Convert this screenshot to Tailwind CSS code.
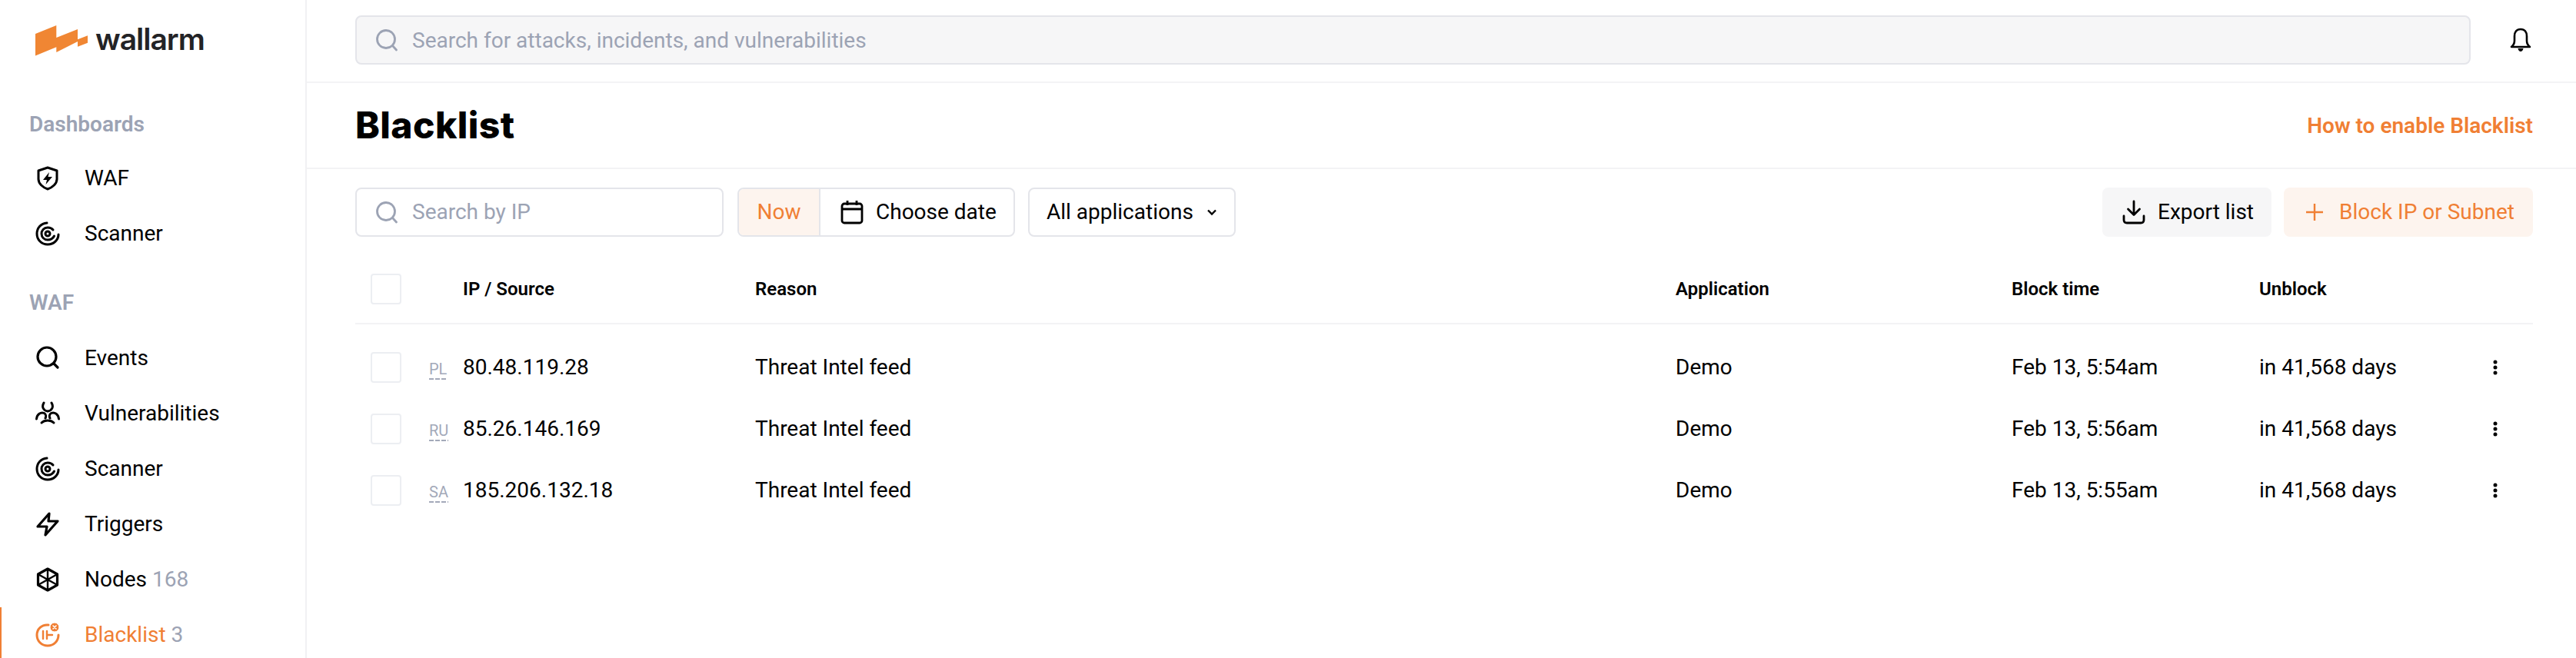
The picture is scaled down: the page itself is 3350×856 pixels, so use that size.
<!DOCTYPE html>
<html lang="en">
<head>
    <meta charset="UTF-8">
    <title>Wallarm - Blacklist</title>
    <script src="https://cdn.jsdelivr.net/npm/@tailwindcss/browser@4"></script>
</head>
<body class="bg-white font-['Roboto',sans-serif] text-[28px] leading-[40px] text-black overflow-hidden">
<div class="flex h-[856px] w-[3350px]">
    <!-- Sidebar -->
    <aside class="w-[399px] shrink-0 border-r-2 border-[#f1f1f3] overflow-hidden">
        <div class="flex items-center h-[106px] pl-[46px] gap-[10px]">
            <svg width="68" height="40" viewBox="0 0 68 40" class="mt-[-1px]">
                <path fill="#f08633" d="M0 11 27.300 0V16L55 5V18.300L68 13.300V22.700L55 27.700V21L27.300 35V28.300L0 39.500Z"/>
            </svg>
            <span class="font-['Inter',sans-serif] font-semibold text-[39px] tracking-[-1px] text-[#232326] mt-[-4px]">wallarm</span>
        </div>
        <div class="mt-[36px] pl-[38px] font-semibold text-[#9ca3b4]">Dashboards</div>
        <nav class="mt-[14px]">
            <a class="flex items-center h-[72px] pl-[46px] gap-[32px]">
                <svg class="w-[32px] h-[32px]" viewBox="0 0 32 32" fill="none" stroke="#000" stroke-width="3" stroke-linejoin="round"><path d="M16 2 28 6V17C28 23 22 28 16 30 10 28 4 23 4 17V6Z"/><path fill="#000" stroke="none" d="M18 8 10 18H15L13.500 24 22 14H16.500Z"/></svg>
                <span>WAF</span>
            </a>
            <a class="flex items-center h-[72px] pl-[46px] gap-[32px]">
                <svg class="w-[32px] h-[32px]" viewBox="0 0 32 32" fill="none" stroke="#000" stroke-width="3" stroke-linecap="round"><path d="M15 2C7 2.500 2 9 2 16 2 24 8 30 16 30 24 30 30 24 30 17"/><path d="M23 11C21 8.500 19 8 16 8 11 8 8 12 8 16 8 20.500 11.500 24 16 24 20 24 23 22 24.500 19"/><circle cx="16" cy="16" r="3"/></svg>
                <span>Scanner</span>
            </a>
        </nav>
        <div class="mt-[34px] pl-[38px] font-semibold text-[#9ca3b4]">WAF</div>
        <nav class="mt-[16px]">
            <a class="flex items-center h-[72px] pl-[46px] gap-[32px]">
                <svg class="w-[32px] h-[32px]" viewBox="0 0 32 32" fill="none" stroke="#000" stroke-width="3.200" stroke-linecap="round"><circle cx="15" cy="14" r="12"/><path d="M24 23 29 28"/></svg>
                <span>Events</span>
            </a>
            <a class="flex items-center h-[72px] pl-[46px] gap-[32px]">
                <svg class="w-[32px] h-[32px]" viewBox="0 0 32 32" fill="none" stroke="#000" stroke-width="3" stroke-linecap="round"><path d="M11 2C8 7 10 12 16 13 22 12 24 7 21 2"/><path d="M1.500 23C2 17 7 13.500 11.500 15.500 14 17 14 20 13 22"/><path d="M30.500 23C30 17 25 13.500 20.500 15.500 18 17 18 20 19 22"/><path d="M8 28C12 24 20 24 24 28"/></svg>
                <span>Vulnerabilities</span>
            </a>
            <a class="flex items-center h-[72px] pl-[46px] gap-[32px]">
                <svg class="w-[32px] h-[32px]" viewBox="0 0 32 32" fill="none" stroke="#000" stroke-width="3" stroke-linecap="round"><path d="M15 2C7 2.500 2 9 2 16 2 24 8 30 16 30 24 30 30 24 30 17"/><path d="M23 11C21 8.500 19 8 16 8 11 8 8 12 8 16 8 20.500 11.500 24 16 24 20 24 23 22 24.500 19"/><circle cx="16" cy="16" r="3"/></svg>
                <span>Scanner</span>
            </a>
            <a class="flex items-center h-[72px] pl-[46px] gap-[32px]">
                <svg class="w-[32px] h-[32px]" viewBox="0 0 32 32" fill="none" stroke="#000" stroke-width="3.200" stroke-linejoin="round"><path d="M18 2 3 19H15L13 30 29 12H17Z"/></svg>
                <span>Triggers</span>
            </a>
            <a class="flex items-center h-[72px] pl-[46px] gap-[32px]">
                <svg class="w-[32px] h-[32px]" viewBox="0 0 32 32" fill="none" stroke="#000" stroke-width="3.200" stroke-linejoin="round"><path d="M16 2 28.500 9V23L16 30 3.500 23V9Z"/><path d="M16 2V30M3.500 9 28.500 23M28.500 9 3.500 23" stroke-width="2.400"/></svg>
                <span>Nodes <span class="text-[#9ca3b4]">168</span></span>
            </a>
            <a class="flex items-center h-[72px] pl-[44px] gap-[32px] border-l-2 border-[#f07f34] text-[#f07f34]">
                <svg class="w-[32px] h-[32px]" viewBox="0 0 32 32" fill="none" stroke="#f07f34" stroke-width="3" stroke-linecap="round"><path d="M17 3C8 2 2 8.500 2 16 2 24 8 30 16 30 24 30 30 24 30 16"/><path d="M10 11V21M15 21V11M15 16H22" stroke-width="2.400"/><circle cx="25" cy="6" r="6" fill="#f07f34" stroke="#fff" stroke-width="1"/><path d="M23 4 27 8M27 4 23 8" stroke="#fff" stroke-width="1.600"/></svg>
                <span>Blacklist <span class="text-[#9ca3b4]">3</span></span>
            </a>
        </nav>
    </aside>

    <!-- Main -->
    <main class="flex-1 min-w-0">
        <header class="flex items-center h-[108px] pb-[2px] pl-[63px] border-b-2 border-[#f3f3f5]">
            <div class="flex items-center w-[2751px] h-[64px] pl-[24px] gap-[18px] bg-[#f6f6f7] border-2 border-[#e4e5ea] rounded-[8px] text-[#9ca3b4]">
                <svg class="w-[30px] h-[30px]" viewBox="0 0 30 30" fill="none" stroke="#9ca3b4" stroke-width="2.800" stroke-linecap="round"><circle cx="14" cy="14" r="11.500"/><path d="M23 23 27.500 28"/></svg>
                <span class="pt-[2px]">Search for attacks, incidents, and vulnerabilities</span>
            </div>
            <svg class="ml-[49px] w-[32px] h-[32px]" viewBox="0 0 32 32" fill="none" stroke="#000" stroke-width="2.600" stroke-linejoin="round"><path d="M16 2C10.500 2 8 6 8 11V17C8 20 6.500 23 4 25H28C25.500 23 24 20 24 17V11C24 6 21.500 2 16 2Z"/><path fill="#000" stroke="none" d="M12.500 27H19.500C19 29.500 17.500 31 16 31 14.500 31 13 29.500 12.500 27Z"/></svg>
        </header>

        <div class="flex items-center justify-between h-[112px] pl-[63px] pr-[56px] border-b-2 border-[#f3f3f5]">
            <h1 class="font-['Inter',sans-serif] font-extrabold text-[48px] tracking-[0.4px]">Blacklist</h1>
            <a class="pt-[2px] font-semibold text-[#f07f34]">How to enable Blacklist</a>
        </div>

        <!-- Toolbar -->
        <div class="flex items-center mt-[24px] pl-[63px] pr-[56px]">
            <div class="flex items-center w-[479px] h-[64px] pl-[24px] gap-[18px] border-2 border-[#e4e5ea] rounded-[8px] text-[#9ca3b4]">
                <svg class="w-[30px] h-[30px]" viewBox="0 0 30 30" fill="none" stroke="#9ca3b4" stroke-width="2.800" stroke-linecap="round"><circle cx="14" cy="14" r="11.500"/><path d="M23 23 27.500 28"/></svg>
                <span>Search by IP</span>
            </div>
            <div class="flex h-[64px] ml-[18px] w-[361px] border-2 border-[#e4e5ea] rounded-[8px] overflow-hidden">
                <div class="flex items-center justify-center w-[106px] bg-[#fdf4ee] text-[#f07f34] border-r-2 border-[#e4e5ea]">Now</div>
                <div class="flex items-center pl-[26px] gap-[16px]">
                    <svg class="w-[30px] h-[32px]" viewBox="0 0 30 32" fill="none" stroke="#000" stroke-width="2.800" stroke-linejoin="round"><rect x="2" y="5" width="26" height="25" rx="3"/><path d="M2 12H28M9 1V7M21 1V7"/></svg>
                    <span>Choose date</span>
                </div>
            </div>
            <div class="flex items-center h-[64px] ml-[17px] w-[270px] pl-[22px] gap-[16px] border-2 border-[#e4e5ea] rounded-[8px]">
                <span>All applications</span>
                <svg class="w-[16px] h-[16px]" viewBox="0 0 16 16" fill="none" stroke="#000" stroke-width="2.400"><path d="M3 5.500 8 10.500 13 5.500"/></svg>
            </div>
            <div class="flex items-center h-[64px] ml-auto w-[220px] pl-[26px] gap-[16px] bg-[#f6f6f7] rounded-[8px]">
                <svg class="w-[30px] h-[32px]" viewBox="0 0 30 32" fill="none" stroke="#000" stroke-width="2.800" stroke-linecap="round" stroke-linejoin="round"><path d="M15 2V19M7.500 12 15 19.500 22.500 12"/><path d="M2 21V26C2 28.500 3.500 30 6 30H24C26.500 30 28 28.500 28 26V21"/></svg>
                <span>Export list</span>
            </div>
            <div class="flex items-center h-[64px] ml-[16px] w-[324px] pl-[28px] gap-[20px] bg-[#fdf4ee] rounded-[8px] text-[#f07f34]">
                <svg class="w-[24px] h-[24px]" viewBox="0 0 24 24" fill="none" stroke="#f07f34" stroke-width="2.400"><path d="M12 1V23M1 12H23"/></svg>
                <span>Block IP or Subnet</span>
            </div>
        </div>

        <!-- Table -->
        <div class="mt-[37px] ml-[63px] mr-[56px]">
            <div class="grid grid-cols-[96px_44px_380px_1197px_437px_322px_1fr] items-center h-[77px] pb-[14px] border-b-2 border-[#f3f3f5] text-[24px] font-semibold">
                <div class="pl-[20px]"><div class="w-[40px] h-[40px] border-2 border-[#eceef2] rounded-[4px]"></div></div>
                <div></div>
                <div>IP / Source</div>
                <div>Reason</div>
                <div>Application</div>
                <div>Block time</div>
                <div>Unblock</div>
            </div>
            <div class="mt-[16px]">
                <div class="grid grid-cols-[96px_44px_380px_1197px_437px_322px_1fr] items-center h-[80px]">
                    <div class="pl-[20px]"><div class="w-[40px] h-[40px] border-2 border-[#eceef2] rounded-[4px]"></div></div>
                    <div><span class="inline-block text-[20px] leading-[24px] pb-[2px] text-[#a3a9b9] bg-[repeating-linear-gradient(90deg,#a3a9b9_0_6px,transparent_6px_8px)] bg-bottom bg-no-repeat bg-[length:100%_2px]">PL</span></div>
                    <div>80.48.119.28</div>
                    <div>Threat Intel feed</div>
                    <div>Demo</div>
                    <div>Feb 13, 5:54am</div>
                    <div class="flex items-center justify-between pr-[46px]"><span>in 41,568 days</span>
                        <svg class="w-[6px] h-[20px]" viewBox="0 0 6 20" fill="#000"><circle cx="3" cy="3" r="2.500"/><circle cx="3" cy="10" r="2.500"/><circle cx="3" cy="17" r="2.500"/></svg>
                    </div>
                </div>
                <div class="grid grid-cols-[96px_44px_380px_1197px_437px_322px_1fr] items-center h-[80px]">
                    <div class="pl-[20px]"><div class="w-[40px] h-[40px] border-2 border-[#eceef2] rounded-[4px]"></div></div>
                    <div><span class="inline-block text-[20px] leading-[24px] pb-[2px] text-[#a3a9b9] bg-[repeating-linear-gradient(90deg,#a3a9b9_0_6px,transparent_6px_8px)] bg-bottom bg-no-repeat bg-[length:100%_2px]">RU</span></div>
                    <div>85.26.146.169</div>
                    <div>Threat Intel feed</div>
                    <div>Demo</div>
                    <div>Feb 13, 5:56am</div>
                    <div class="flex items-center justify-between pr-[46px]"><span>in 41,568 days</span>
                        <svg class="w-[6px] h-[20px]" viewBox="0 0 6 20" fill="#000"><circle cx="3" cy="3" r="2.500"/><circle cx="3" cy="10" r="2.500"/><circle cx="3" cy="17" r="2.500"/></svg>
                    </div>
                </div>
                <div class="grid grid-cols-[96px_44px_380px_1197px_437px_322px_1fr] items-center h-[80px]">
                    <div class="pl-[20px]"><div class="w-[40px] h-[40px] border-2 border-[#eceef2] rounded-[4px]"></div></div>
                    <div><span class="inline-block text-[20px] leading-[24px] pb-[2px] text-[#a3a9b9] bg-[repeating-linear-gradient(90deg,#a3a9b9_0_6px,transparent_6px_8px)] bg-bottom bg-no-repeat bg-[length:100%_2px]">SA</span></div>
                    <div>185.206.132.18</div>
                    <div>Threat Intel feed</div>
                    <div>Demo</div>
                    <div>Feb 13, 5:55am</div>
                    <div class="flex items-center justify-between pr-[46px]"><span>in 41,568 days</span>
                        <svg class="w-[6px] h-[20px]" viewBox="0 0 6 20" fill="#000"><circle cx="3" cy="3" r="2.500"/><circle cx="3" cy="10" r="2.500"/><circle cx="3" cy="17" r="2.500"/></svg>
                    </div>
                </div>
            </div>
        </div>
    </main>
</div>
</body>
</html>
